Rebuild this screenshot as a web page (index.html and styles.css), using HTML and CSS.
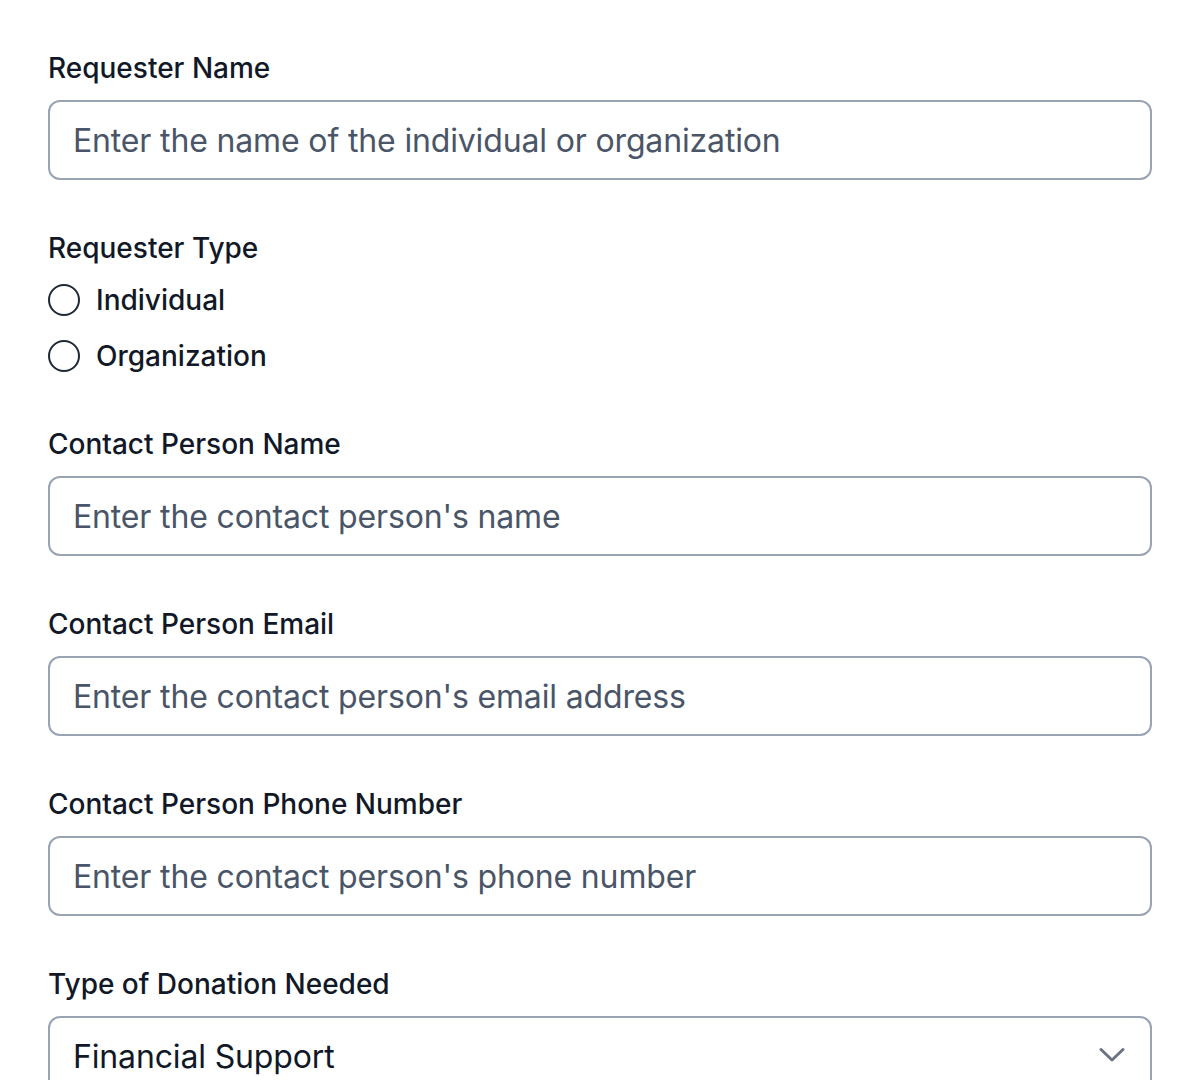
FILE: index.html
```html
<!DOCTYPE html>
<html lang="en">
<head>
<meta charset="utf-8">
<title>Donation Request</title>
<link rel="stylesheet" href="styles.css">
</head>
<body>
<form class="form">
  <div class="field">
    <label class="label" for="rname">Requester Name</label>
    <input class="input" id="rname" type="text" placeholder="Enter the name of the individual or organization">
  </div>
  <div class="field">
    <span class="label">Requester Type</span>
    <div class="radios">
      <label class="radio-row"><input class="radio" type="radio" name="rtype"><span>Individual</span></label>
      <label class="radio-row"><input class="radio" type="radio" name="rtype"><span>Organization</span></label>
    </div>
  </div>
  <div class="field">
    <label class="label" for="cname">Contact Person Name</label>
    <input class="input" id="cname" type="text" placeholder="Enter the contact person's name">
  </div>
  <div class="field">
    <label class="label" for="cemail">Contact Person Email</label>
    <input class="input" id="cemail" type="email" placeholder="Enter the contact person's email address">
  </div>
  <div class="field">
    <label class="label" for="cphone">Contact Person Phone Number</label>
    <input class="input" id="cphone" type="tel" placeholder="Enter the contact person's phone number">
  </div>
  <div class="field">
    <label class="label" for="dtype">Type of Donation Needed</label>
    <div class="select-wrap">
      <select class="input select" id="dtype">
        <option>Financial Support</option>
        <option>In-Kind Donation</option>
        <option>Volunteer Support</option>
      </select>
      <svg class="chevron" viewBox="0 0 26 16" width="26" height="16" fill="none" stroke="currentColor" stroke-width="3" stroke-linecap="round" stroke-linejoin="round"><path d="M2 2.5L13 13L24 2.5"/></svg>
    </div>
  </div>
</form>
</body>
</html>
```
FILE: styles.css
```css
* { box-sizing: border-box; }
html, body { margin: 0; padding: 0; background: #ffffff; }
body {
  font-family: Inter, "Noto Sans", sans-serif;
  color: #111827;
  padding: 48px;
}
.form {
  display: flex;
  flex-direction: column;
  gap: 48px;
}
.field {
  display: flex;
  flex-direction: column;
  gap: 12px;
}
.label {
  display: block;
  font-size: 28px;
  line-height: 40px;
  font-weight: 500;
  color: #111827;
}
.input {
  display: block;
  width: 100%;
  height: 80px;
  border: 2px solid #9aa3b2;
  border-radius: 12px;
  padding: 0 23px;
  font-family: Inter, "Noto Sans", sans-serif;
  font-size: 32px;
  letter-spacing: -0.15px;
  color: #111827;
  background: #ffffff;
  outline: none;
}
.input::placeholder { color: #4a5568; opacity: 1; }
.radios {
  display: flex;
  flex-direction: column;
  gap: 16px;
}
.radio-row {
  display: flex;
  align-items: center;
  gap: 16px;
  height: 40px;
  font-size: 28px;
  font-weight: 500;
  color: #111827;
}
.radio {
  appearance: none;
  -webkit-appearance: none;
  margin: 0;
  width: 32px;
  height: 32px;
  border: 2px solid #1f2937;
  border-radius: 50%;
  background: #fff;
}
.select-wrap { position: relative; }
.select {
  appearance: none;
  -webkit-appearance: none;
  padding-right: 72px;
}
.chevron {
  position: absolute;
  right: 27px;
  top: 31px;
  color: #6b7280;
  pointer-events: none;
}
```
